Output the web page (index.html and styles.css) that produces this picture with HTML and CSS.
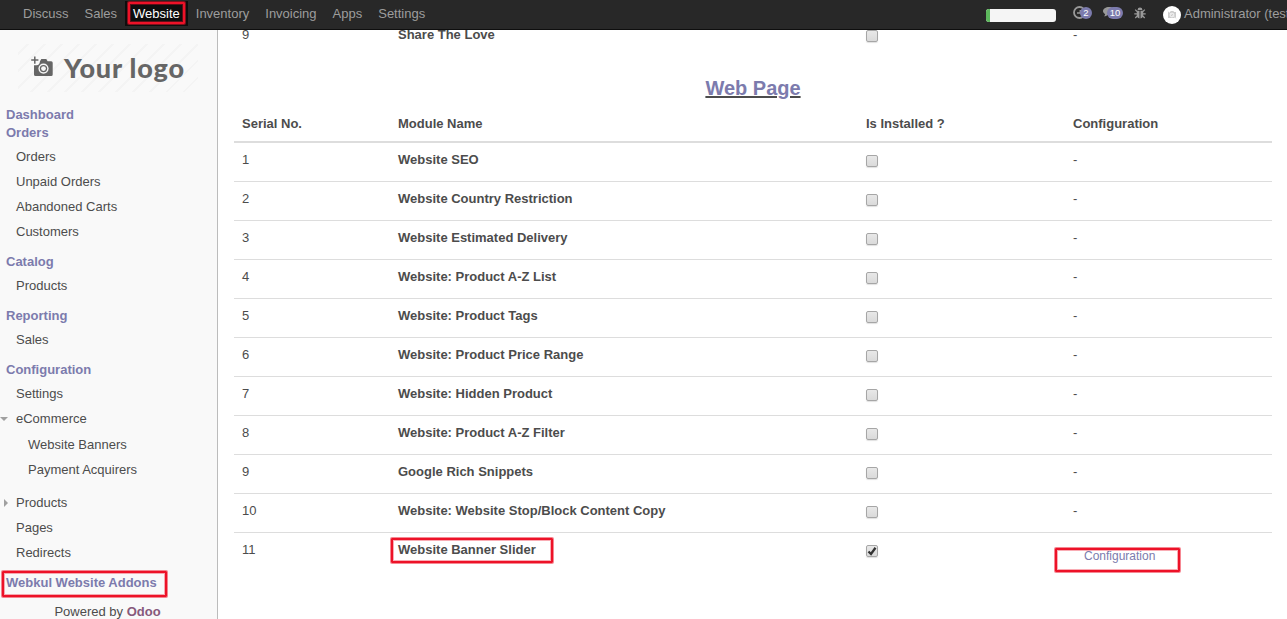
FILE: index.html
```
<!DOCTYPE html>
<html lang="en">
<head>
<meta charset="utf-8">
<title>Website - Odoo</title>
<link rel="stylesheet" href="styles.css">
</head>
<body>
<header class="topbar">
  <nav class="menu">
    <a>Discuss</a><a>Sales</a><a class="active">Website<span class="mark mark-nav"></span></a><a>Inventory</a><a>Invoicing</a><a>Apps</a><a>Settings</a>
  </nav>
  <div class="systray">
    <div class="progress"><div class="progress-fill"></div></div>
    <div class="tray-item activity">
      <svg width="13" height="13" viewBox="0 0 13 13"><circle cx="6.500" cy="6.500" r="5.500" fill="none" stroke="#999" stroke-width="1.800"/><path d="M4 7h4M7.300 4v3.500" stroke="#999" stroke-width="1.500"/></svg>
      <span class="badge">2</span>
    </div>
    <div class="tray-item chat">
      <svg width="14" height="13" viewBox="0 0 14 13"><path d="M6 1C2.700 1 0 2.700 0 5c0 1.400.9 2.500 2.200 3.200C2 9.100 1.500 9.800 1 10.300 2.500 10.200 3.700 9.600 4.500 8.900 9 9.300 12 7.500 12 5S9.300 1 6 1z" fill="#999"/></svg>
      <span class="badge">10</span>
    </div>
    <svg class="bug" width="12" height="12" viewBox="0 0 12 12"><path d="M3.600 3a2.400 2.400 0 0 1 4.800 0z" fill="#999"/><path d="M2.800 3.700h2.700V11.500C3.500 11.300 2.800 9.800 2.800 8zM6.500 3.700h2.700V8c0 1.800-.7 3.300-2.700 3.500z" fill="#999"/><path d="M3 4.500L1.200 2.700M9 4.500l1.800-1.800M3 6.800H.3M9 6.800h2.700M3.200 9L1.300 11M8.800 9l1.900 2" stroke="#999" stroke-width="1.200"/></svg>
    <svg class="avatar" width="18" height="18" viewBox="0 0 18 18"><circle cx="9" cy="9" r="9" fill="#fff"/><path d="M5 6h2l.8-1h2.500l.8 1H13v6H5z" fill="#ccc"/><circle cx="9" cy="9" r="1.900" fill="#ccc" stroke="#fff" stroke-width=".8"/><path d="M4.200 4.500l9.600 8.700" stroke="#eee" stroke-width=".8"/></svg>
    <span class="user">Administrator (test)</span>
  </div>
</header>
<div class="layout">
  <aside class="sidebar">
    <div class="logo">
      <svg width="23" height="22" viewBox="0 0 23 22"><path d="M3.800.5v7.200M.2 4.100h7.200" stroke="#666" stroke-width="1.500"/><path d="M9 5.300L10.300 3h5l1.300 2.300h3.600q1.500 0 1.500 1.500v11.700q0 1.500-1.500 1.500H4.500Q3 20 3 18.500V9.200h2.600q3 0 3.400-3.900z" fill="#666"/><circle cx="12.500" cy="12.600" r="5.100" fill="#f9f9f9"/><circle cx="12.500" cy="12.600" r="3.700" fill="#666"/><circle cx="12.500" cy="12.600" r="2.400" fill="#f9f9f9"/></svg>
      <span class="logo-text">Your logo</span>
    </div>
    <h4 class="group">Dashboard</h4>
    <h4 class="group">Orders</h4>
    <ul class="items"><li>Orders</li><li>Unpaid Orders</li><li>Abandoned Carts</li><li>Customers</li></ul>
    <h4 class="group">Catalog</h4>
    <ul class="items"><li>Products</li></ul>
    <h4 class="group">Reporting</h4>
    <ul class="items"><li>Sales</li></ul>
    <h4 class="group">Configuration</h4>
    <ul class="items">
      <li>Settings</li>
      <li class="open">eCommerce</li>
      <li class="nested"><ul class="sub"><li>Website Banners</li><li>Payment Acquirers</li></ul></li>
      <li class="closed">Products</li><li>Pages</li><li>Redirects</li>
    </ul>
    <h4 class="group">Webkul Website Addons<span class="mark mark-addons"></span></h4>
    <footer class="powered">Powered by <b>Odoo</b></footer>
  </aside>
  <main class="content">
    <div class="row previous"><span>9</span><b>Share The Love</b><span><i class="check"></i></span><span>-</span></div>
    <h2 class="title"><a>Web Page</a></h2>
    <section class="table">
      <div class="row head"><b>Serial No.</b><b>Module Name</b><b>Is Installed ?</b><b>Configuration</b></div>
      <div class="row"><span>1</span><b>Website SEO</b><span><i class="check"></i></span><span>-</span></div>
      <div class="row"><span>2</span><b>Website Country Restriction</b><span><i class="check"></i></span><span>-</span></div>
      <div class="row"><span>3</span><b>Website Estimated Delivery</b><span><i class="check"></i></span><span>-</span></div>
      <div class="row"><span>4</span><b>Website: Product A-Z List</b><span><i class="check"></i></span><span>-</span></div>
      <div class="row"><span>5</span><b>Website: Product Tags</b><span><i class="check"></i></span><span>-</span></div>
      <div class="row"><span>6</span><b>Website: Product Price Range</b><span><i class="check"></i></span><span>-</span></div>
      <div class="row"><span>7</span><b>Website: Hidden Product</b><span><i class="check"></i></span><span>-</span></div>
      <div class="row"><span>8</span><b>Website: Product A-Z Filter</b><span><i class="check"></i></span><span>-</span></div>
      <div class="row"><span>9</span><b>Google Rich Snippets</b><span><i class="check"></i></span><span>-</span></div>
      <div class="row"><span>10</span><b>Website: Website Stop/Block Content Copy</b><span><i class="check"></i></span><span>-</span></div>
      <div class="row last"><span>11</span><b>Website Banner Slider<span class="mark mark-module"></span></b><span><i class="check"><svg width="10" height="10" viewBox="0 0 10 10"><path d="M1.500 5.500L4 8 8.500 1.800" fill="none" stroke="#333" stroke-width="2.300"/></svg></i></span><span class="config"><a>Configuration</a><span class="mark mark-config"></span></span></div>
    </section>
  </main>
</div>
</body>
</html>
```
FILE: styles.css
```
* { box-sizing: border-box; }
body { margin: 0; height: 619px; overflow: hidden; display: flex; flex-direction: column; font: 13px/18px "Liberation Sans", Arial, sans-serif; color: #4c4c4c; background: #fff; }
ul, h2, h4 { margin: 0; padding: 0; list-style: none; }

.topbar { flex: none; height: 30px; display: flex; justify-content: space-between; overflow: hidden; background: #282828; border-bottom: 1px solid #0e0e0e; color: #9d9d9d; }
.menu { display: flex; padding: 1px 0 3px 15px; }
.menu a { position: relative; padding: 4px 8px; }
.menu .active { background: #0e0e0e; color: #fff; }
.systray { flex: none; width: 301px; display: flex; white-space: nowrap; }
.systray > * { flex: none; }
.progress { width: 70px; height: 13px; margin-top: 9px; border-radius: 3px; overflow: hidden; background: #f5f5f5; }
.progress-fill { width: 4px; height: 100%; background: #5cb85c; }
.tray-item { position: relative; height: 20px; padding-top: 6px; }
.activity { width: 30px; margin-left: 17px; }
.chat { width: 31px; }
.badge { position: absolute; left: 7px; top: 7px; width: 12px; height: 12px; border-radius: 6px; background: #7c7bad; color: #fff; font-size: 9.5px; line-height: 12px; text-align: center; }
.chat .badge { left: 4px; width: 16px; }
.bug { margin-top: 7px; }
.avatar { margin: 6px 3px 0 17px; }
.user { padding-top: 5px; }

.layout { flex: 1; min-height: 0; display: flex; }
.sidebar { flex: none; width: 218px; padding: 14px 6px 0; background: #f9f9f9; border-right: 1px solid #bcbcbc; }
.logo { display: flex; height: 48px; width: 180px; margin: 0 0 14px 12px; padding: 12px 0 0 13px; background: repeating-linear-gradient(135deg, #f9f9f9 0 6px, #f4f4f4 6px 8px, #f9f9f9 8px 12px); color: #666; }
.logo svg { flex: none; }
.logo-text { margin-left: 10px; font: 900 27px/23px Lato, sans-serif; letter-spacing: .8px; white-space: nowrap; }
.group { position: relative; font-size: 13px; line-height: 18px; color: #7c7bad; }
.items { padding: 2px 0 9px 10px; }
.items li { position: relative; line-height: 25px; }
.items .nested { padding: 1px 0 8px 12px; }
.open::before, .closed::before { content: ""; position: absolute; border: 4px solid transparent; }
.open::before { left: -16px; top: 11px; border-top-color: #a0a0a0; border-bottom: 0; }
.closed::before { left: -12px; top: 9px; border-left-color: #a0a0a0; border-right: 0; }
.powered { padding: 11px 2px 0 0; text-align: center; }
.powered b { color: #875a7b; }

.content { flex: 1; padding: 0 15px 0 16px; }
.row { display: grid; grid-template-columns: 156px 468px 207px 1fr; height: 39px; padding: 8px 8px 0; border-bottom: 1px solid #ddd; }
.row.previous { height: 45px; padding-top: 0; border: 0; margin-top: -4px; }
.title { height: 36px; padding-top: 5px; font-size: 20px; line-height: 24px; text-align: center; text-decoration: underline; text-decoration-color: #4c4c4c; }
.title a { color: #7c7bad; }
.row.head { height: 36px; border-bottom: 2px solid #ddd; }
.row.last { border: 0; }
.check { display: block; width: 12px; height: 12px; margin-top: 4px; border: 1px solid #a6a6a6; border-radius: 2px; background: linear-gradient(#e8e8e8, #dadada); box-shadow: 0 1px 1px #e0e0e0; }
.check svg { display: block; }
.config { position: relative; padding: 7px 0 0 11px; font-size: 12px; line-height: 16px; color: #7c7bad; }
.row b { position: relative; }

.mark { position: absolute; border: 2px solid #ed1228; border-radius: 1px; box-shadow: 0 0 0 1px rgba(237, 18, 40, .5), inset 0 0 0 1px rgba(237, 18, 40, .35); }
.mark-nav { left: 3px; top: 1px; width: 57px; height: 22px; }
.mark-addons { left: -4px; top: -3px; width: 165px; height: 26px; }
.mark-module { left: -7px; top: -3px; width: 162px; height: 25px; }
.mark-config { left: -18px; top: 7px; width: 125px; height: 24px; }
```
